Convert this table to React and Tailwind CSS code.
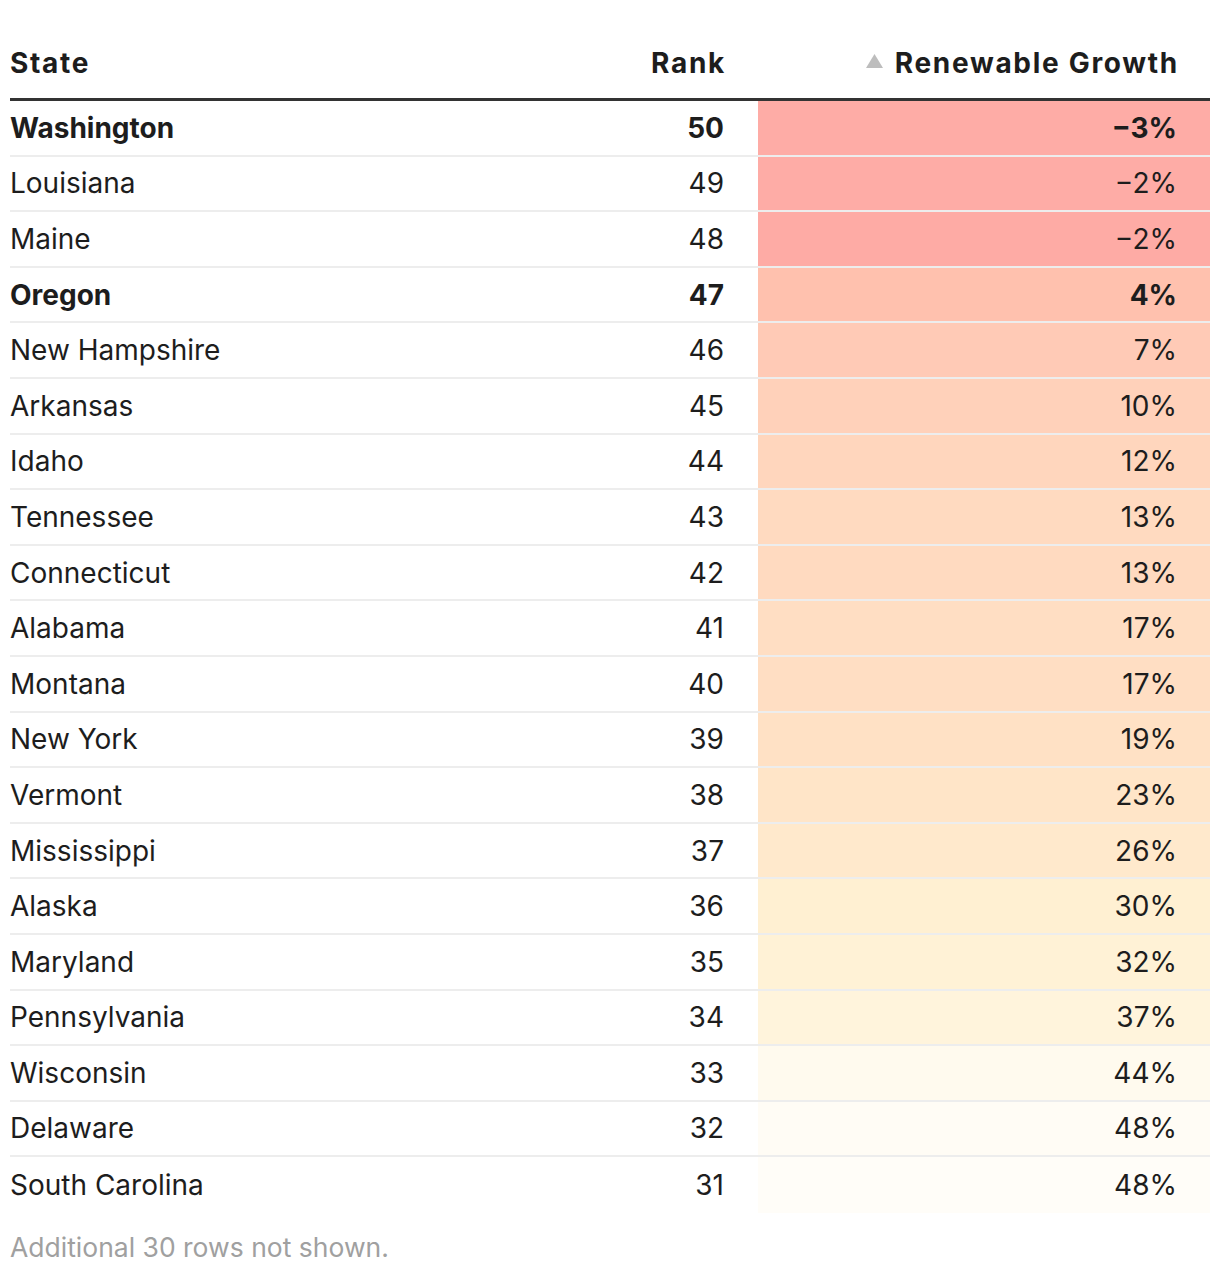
import React from "react";

const rows = [
  { state: "Washington", rank: 50, growth: "−3%", bold: true, bg: "bg-[#feaca6]" },
  { state: "Louisiana", rank: 49, growth: "−2%", bg: "bg-[#feaca6]" },
  { state: "Maine", rank: 48, growth: "−2%", bg: "bg-[#feaba5]" },
  { state: "Oregon", rank: 47, growth: "4%", bold: true, bg: "bg-[#ffc1ae]" },
  { state: "New Hampshire", rank: 46, growth: "7%", bg: "bg-[#ffcab6]" },
  { state: "Arkansas", rank: 45, growth: "10%", bg: "bg-[#ffd1ba]" },
  { state: "Idaho", rank: 44, growth: "12%", bg: "bg-[#ffd6bd]" },
  { state: "Tennessee", rank: 43, growth: "13%", bg: "bg-[#ffdac0]" },
  { state: "Connecticut", rank: 42, growth: "13%", bg: "bg-[#ffdac0]" },
  { state: "Alabama", rank: 41, growth: "17%", bg: "bg-[#ffdec3]" },
  { state: "Montana", rank: 40, growth: "17%", bg: "bg-[#ffdec3]" },
  { state: "New York", rank: 39, growth: "19%", bg: "bg-[#ffe1c5]" },
  { state: "Vermont", rank: 38, growth: "23%", bg: "bg-[#ffe5c8]" },
  { state: "Mississippi", rank: 37, growth: "26%", bg: "bg-[#ffe9cc]" },
  { state: "Alaska", rank: 36, growth: "30%", bg: "bg-[#fff0d2]" },
  { state: "Maryland", rank: 35, growth: "32%", bg: "bg-[#fff2d6]" },
  { state: "Pennsylvania", rank: 34, growth: "37%", bg: "bg-[#fff4dc]" },
  { state: "Wisconsin", rank: 33, growth: "44%", bg: "bg-[#fffaee]" },
  { state: "Delaware", rank: 32, growth: "48%", bg: "bg-[#fffcf5]" },
  { state: "South Carolina", rank: 31, growth: "48%", bg: "bg-[#fffdf8]" },
];

const App = () => {
  return (
    <div className="w-[1220px] bg-white px-[10px] text-[#1d1d1d] font-['Inter','Roboto',sans-serif] text-[28px]">
      <div className="w-[1200px]">
        {/* Header */}
        <div className="flex h-[101px] items-end border-b-[3px] border-[#333333] pb-[18px] font-bold leading-[34px] tracking-[1.7px]">
          <div className="flex-1">State</div>
          <div className="w-[200px] pr-[32px] text-right">Rank</div>
          <div className="flex w-[452px] items-center justify-end gap-[12px] pr-[31px]">
            <svg width="17" height="14" viewBox="0 0 17 14" className="mb-[4px]">
              <polygon points="8.5,0 17,14 0,14" fill="#bdbdbd" />
            </svg>
            <span>Renewable Growth</span>
          </div>
        </div>

        {/* Rows */}
        {rows.map((r, i) => (
          <div
            key={r.state}
            className={`flex h-[55.6px] leading-[34px] ${i < rows.length - 1 ? "border-b-2 border-black/[0.07]" : ""} ${r.bold ? "font-bold" : ""}`}
          >
            <div className="flex flex-1 items-center">{r.state}</div>
            <div className="flex w-[200px] items-center justify-end pr-[34px]">{r.rank}</div>
            <div className={`flex w-[452px] items-center justify-end pr-[33px] ${r.bg}`}>{r.growth}</div>
          </div>
        ))}

        <div className="pt-[18px] pb-[14px] text-[26.5px] leading-[32px] text-[#a0a0a0]">
          Additional 30 rows not shown.
        </div>
      </div>
    </div>
  );
};

export default App;
